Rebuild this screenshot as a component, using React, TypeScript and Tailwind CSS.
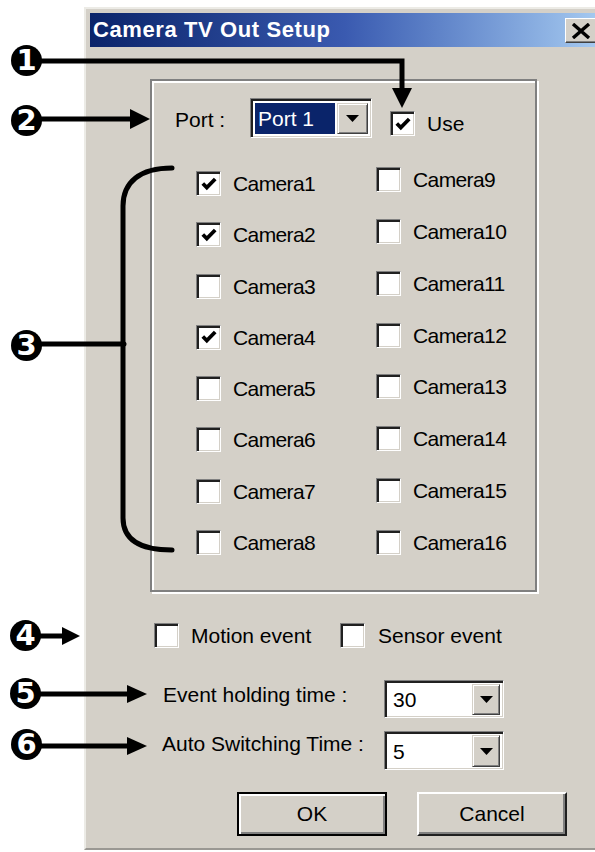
import React from "react";

const Check = ({ checked = false }: { checked?: boolean }) => (
  <div className="w-[25px] h-[25px] shrink-0 bg-white border border-t-[#808080] border-l-[#808080] border-r-white border-b-white shadow-[inset_2px_2px_0_#202020,inset_-1px_-1px_0_#d4d0c8] flex items-center justify-center">
    {checked && (
      <svg width="16" height="14" viewBox="0 0 16 14">
        <path d="M1.8 6.5 L5.8 10.5 L14.2 2" stroke="#000" strokeWidth="3.8" fill="none" />
      </svg>
    )}
  </div>
);

const Arrow = ({ className }: { className: string }) => (
  <div
    className={
      "shrink-0 bg-[#d4d0c8] border border-t-[#d4d0c8] border-l-[#d4d0c8] border-r-[#404040] border-b-[#404040] shadow-[inset_1px_1px_0_#fff,inset_-1px_-1px_0_#808080] flex items-center justify-center " +
      className
    }
  >
    <svg width="13" height="7" viewBox="0 0 13 7">
      <polygon points="0,0 13,0 6.5,7" fill="#000" />
    </svg>
  </div>
);

const Item = ({ label, checked }: { label: string; checked?: boolean }) => (
  <div className="flex items-center h-[25px]">
    <Check checked={checked} />
    <span className="ml-[12px] leading-[25px] tracking-[-0.6px]">{label}</span>
  </div>
);

const Badge = ({ n, className }: { n: string; className: string }) => (
  <div
    className={
      "absolute w-[31px] h-[31px] rounded-full bg-black text-white font-bold text-[29px] leading-[31px] text-center font-['DejaVu_Sans',sans-serif] " +
      className
    }
  >
    {n}
  </div>
);

export default function App() {
  const left = [
    ["Camera1", true],
    ["Camera2", true],
    ["Camera3", false],
    ["Camera4", true],
    ["Camera5", false],
    ["Camera6", false],
    ["Camera7", false],
    ["Camera8", false],
  ] as const;
  const right = [
    "Camera9",
    "Camera10",
    "Camera11",
    "Camera12",
    "Camera13",
    "Camera14",
    "Camera15",
    "Camera16",
  ];
  return (
    <div className="relative w-[595px] h-[852px] overflow-hidden bg-white text-black text-[21px] font-['Liberation_Sans',Arial,sans-serif]">
      <div className="pl-[84px] pt-[7px]">
        <div className="w-[521px] h-[843px] bg-[#d4d0c8] border-t-2 border-l-2 border-b-2 border-t-[#ecebe6] border-l-[#ecebe6] border-b-[#9a9893] pl-[4px] pt-[4px] flex flex-col">
          {/* Title bar */}
          <div className="h-[34px] w-[509px] bg-linear-to-r from-[#0a246a] via-[#3a5ab0] to-[#a6caf0] flex items-center">
            <span className="pl-[3px] text-white font-bold text-[22px] tracking-[0.6px] leading-none">
              Camera TV Out Setup
            </span>
            <div className="ml-auto mr-[2px] mt-[1px] w-[32px] h-[25px] bg-[#d4d0c8] border border-t-white border-l-white border-r-[#404040] border-b-[#404040] shadow-[inset_-1px_-1px_0_#808080] flex items-center justify-center">
              <svg width="20" height="16" viewBox="0 0 20 16">
                <path d="M2 1 L18 15 M18 1 L2 15" stroke="#000" strokeWidth="3.4" />
              </svg>
            </div>
          </div>

          {/* Group box */}
          <div className="ml-[60px] mt-[32px] w-[387px] h-[513px] border-2 border-[#808080] shadow-[inset_2px_2px_0_#fff,2px_2px_0_#fff] pl-[23px] pt-[17px]">
            <div className="flex items-center h-[40px]">
              <span className="w-[75px] leading-none mt-[3px]">Port :</span>
              <div className="w-[122px] h-[40px] flex bg-white border border-t-[#808080] border-l-[#808080] border-r-white border-b-white shadow-[inset_2px_2px_0_#202020,inset_-1px_-1px_0_#d4d0c8] pl-[4px] pt-[4px] pb-[3px] pr-[3px]">
                <div className="flex-1 bg-[#0a246a] text-white pl-[3px] flex items-center leading-none mr-[2px]">
                  Port 1
                </div>
                <Arrow className="w-[31px]" />
              </div>
              <div className="flex items-center ml-[18px] mt-[11px]">
                <Check checked />
                <span className="ml-[12px] leading-none">Use</span>
              </div>
            </div>

            <div className="flex">
              <div className="ml-[21px] mt-[33px] w-[180px] flex flex-col gap-[26.3px]">
                {left.map(([l, c]) => (
                  <Item key={l} label={l} checked={c} />
                ))}
              </div>
              <div className="mt-[29px] flex flex-col gap-[26.86px]">
                {right.map((l) => (
                  <Item key={l} label={l} />
                ))}
              </div>
            </div>
          </div>

          {/* Events */}
          <div className="ml-[64px] mt-[31px] flex items-center h-[25px]">
            <div className="w-[186px] flex items-center">
              <Check />
              <span className="ml-[12px]">Motion event</span>
            </div>
            <Check />
            <span className="ml-[13px]">Sensor event</span>
          </div>

          <div className="mt-[32px] flex items-start">
            <span className="ml-[73px] w-[221px] mt-[3px] leading-[24px]">Event holding time :</span>
            <div className="w-[120px] h-[38px] flex bg-white border border-t-[#808080] border-l-[#808080] border-r-white border-b-white shadow-[inset_2px_2px_0_#202020,inset_-1px_-1px_0_#d4d0c8] pl-[8px] pt-[3px] pb-[2px] pr-[3px]">
              <div className="flex-1 flex items-center leading-none">30</div>
              <Arrow className="w-[28px]" />
            </div>
          </div>

          <div className="mt-[13px] flex items-start">
            <span className="ml-[72px] w-[222px] mt-[1px] leading-[24px]">Auto Switching Time :</span>
            <div className="w-[120px] h-[39px] flex bg-white border border-t-[#808080] border-l-[#808080] border-r-white border-b-white shadow-[inset_2px_2px_0_#202020,inset_-1px_-1px_0_#d4d0c8] pl-[8px] pt-[3px] pb-[2px] pr-[3px]">
              <div className="flex-1 flex items-center leading-none">5</div>
              <Arrow className="w-[28px]" />
            </div>
          </div>

          <div className="mt-[22px] ml-[147px] flex gap-[30px]">
            <div className="w-[150px] h-[44px] border-2 border-black shadow-[inset_2px_2px_0_#fff,inset_-2px_-2px_0_#808080] flex items-center justify-center">
              OK
            </div>
            <div className="w-[150px] h-[44px] border-2 border-t-white border-l-white border-r-[#202020] border-b-[#202020] shadow-[inset_-2px_-2px_0_#808080] flex items-center justify-center">
              Cancel
            </div>
          </div>
        </div>
      </div>

      {/* Annotation lines */}
      <svg className="absolute left-0 top-0 pointer-events-none" width="595" height="852" viewBox="0 0 595 852">
        <g stroke="#000" strokeWidth="5" fill="none" strokeLinecap="round">
          <path d="M30 61 L402 61 L402 92" strokeLinecap="butt" />
          <path d="M30 119 L133 119" />
          <path d="M30 344 L124 344" />
          <path d="M172 168 C140 168 123 182 123 206 L123 518 C123 538 138 550 172 550" />
          <path d="M30 636 L64 636" />
          <path d="M30 694 L130 694" />
          <path d="M30 746 L130 746" />
        </g>
        <g fill="#000">
          <polygon points="392,88 412,88 402,108" />
          <polygon points="130,109 130,129 150,119" />
          <polygon points="62,627 62,645 80,636" />
          <polygon points="127,685 127,703 147,694" />
          <polygon points="127,737 127,755 147,746" />
        </g>
      </svg>

      <Badge n="1" className="left-[11px] top-[45px]" />
      <Badge n="2" className="left-[11px] top-[105px]" />
      <Badge n="3" className="left-[11px] top-[330px]" />
      <Badge n="4" className="left-[10px] top-[620px]" />
      <Badge n="5" className="left-[10px] top-[678px]" />
      <Badge n="6" className="left-[11px] top-[729px]" />
    </div>
  );
}
